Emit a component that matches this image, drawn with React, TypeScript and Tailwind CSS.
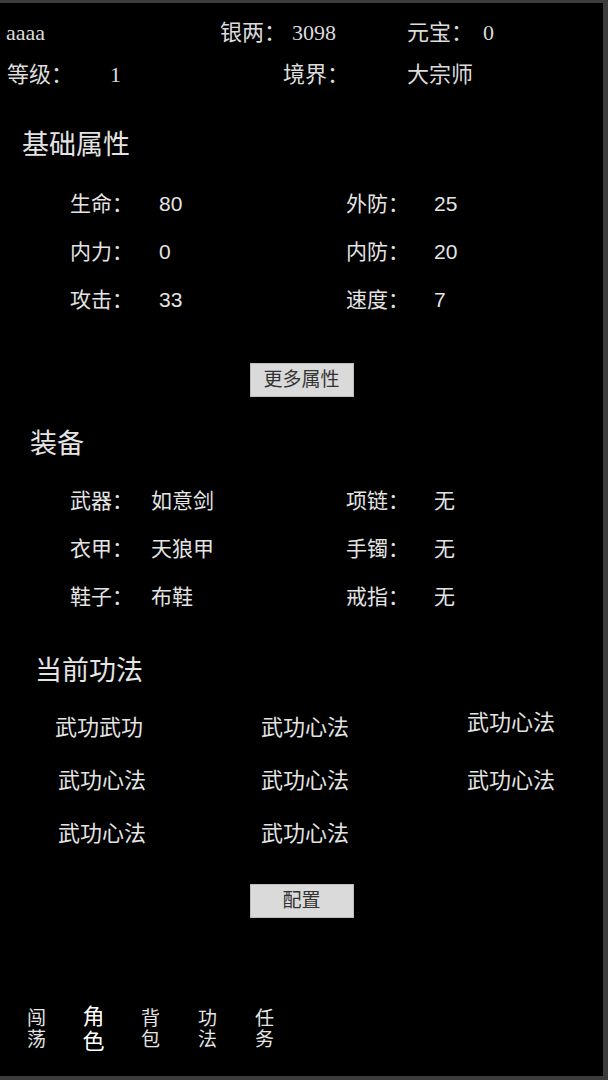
const sans = "font-['Liberation_Sans','Noto_Sans_CJK_SC',sans-serif]"
const serif = "font-['Liberation_Serif','Noto_Sans_CJK_SC',serif]"

const stats = [
  ["生命：", "80", "外防：", "25"],
  ["内力：", "0", "内防：", "20"],
  ["攻击：", "33", "速度：", "7"],
]

const gear = [
  ["武器：", "如意剑", "项链：", "无"],
  ["衣甲：", "天狼甲", "手镯：", "无"],
  ["鞋子：", "布鞋", "戒指：", "无"],
]

const nav = [
  { top: "闯", bottom: "荡", active: false },
  { top: "角", bottom: "色", active: true },
  { top: "背", bottom: "包", active: false },
  { top: "功", bottom: "法", active: false },
  { top: "任", bottom: "务", active: false },
]

function Button({ label }: { label: string }) {
  return (
    <button className="mx-auto flex h-[34px] w-[104px] items-center justify-center border border-[#bdbdbd] bg-[#dadada] text-[19px] text-[#333]">
      {label}
    </button>
  )
}

export default function App() {
  return (
    <div
      className={`flex h-[1080px] w-[608px] flex-col border-t-[3px] border-r-[5px] border-b-[4px] border-[#3c3c3c] bg-black text-[#e4e4e4] ${sans}`}
    >
      {/* header */}
      <div className={`${serif} text-[22px] leading-none text-[#dcdcdc]`}>
        <div className="flex h-[60px] items-center">
          <span className="w-[220px] pl-[6px]">aaaa</span>
          <span className="w-[72px]">银两：</span>
          <span className="w-[115px]">3098</span>
          <span className="w-[76px]">元宝：</span>
          <span>0</span>
        </div>
        <div className="flex h-[24px] items-center">
          <span className="w-[110px] pl-[7px]">等级：</span>
          <span className="w-[173px]">1</span>
          <span className="w-[124px]">境界：</span>
          <span>大宗师</span>
        </div>
      </div>

      <h2 className="mt-[45px] pl-[22px] text-[27px] leading-[26px]">基础属性</h2>
      <div className="mt-[22px] grid grid-cols-[89px_187px_88px_1fr] pl-[70px] text-[21px]">
        {stats.flatMap((row, i) =>
          row.map((cell, j) => (
            <div key={`${i}-${j}`} className="flex h-[48px] items-center">
              {cell}
            </div>
          ))
        )}
      </div>
      <div className="mt-[39px]">
        <Button label="更多属性" />
      </div>

      <h2 className="mt-[34px] pl-[30px] text-[27px] leading-[26px]">装备</h2>
      <div className="mt-[20px] grid grid-cols-[81px_195px_88px_1fr] pl-[70px] text-[21px]">
        {gear.flatMap((row, i) =>
          row.map((cell, j) => (
            <div key={`${i}-${j}`} className="flex h-[48px] items-center">
              {cell}
            </div>
          ))
        )}
      </div>

      <h2 className="mt-[37px] pl-[35px] text-[27px] leading-[26px]">当前功法</h2>
      <div className="mt-[17px] pl-[55px] text-[22px]">
        <div className="flex h-[52px] items-center">
          <span className="w-[206px]">武功武功</span>
          <span className="w-[206px]">武功心法</span>
          <span className="-mt-[10px]">武功心法</span>
        </div>
        <div className="flex h-[54px] items-center">
          <span className="w-[206px] pl-[3px]">武功心法</span>
          <span className="w-[206px]">武功心法</span>
          <span>武功心法</span>
        </div>
        <div className="flex h-[52px] items-center">
          <span className="w-[206px] pl-[3px]">武功心法</span>
          <span className="w-[206px]">武功心法</span>
        </div>
      </div>
      <div className="mt-[25px]">
        <Button label="配置" />
      </div>

      {/* bottom nav */}
      <nav className="mt-auto flex items-center pb-[22px] pl-[8px]">
        {nav.map((item) => (
          <div
            key={item.top}
            className={`flex w-[57px] flex-col items-center ${item.active ? "text-[22px] leading-[25px] text-white" : "text-[19px] leading-[21px]"}`}
          >
            <span>{item.top}</span>
            <span>{item.bottom}</span>
          </div>
        ))}
      </nav>
    </div>
  )
}
